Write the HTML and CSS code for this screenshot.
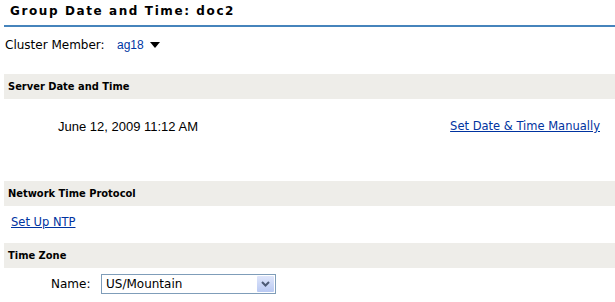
FILE: index.html
```html
<!DOCTYPE html>
<html>
<head>
<meta charset="utf-8">
<link rel="stylesheet" href="styles.css">
</head>
<body>
<div class="page">
  <div class="title">Group Date and Time: doc2</div>
  <div class="member-row">
    <span class="label">Cluster Member:</span>
    <span class="member">ag18</span>
    <svg class="caret" width="10" height="6" viewBox="0 0 10 6"><path d="M0 0H10L5 6Z" fill="#000"/></svg>
  </div>
  <div class="bar">Server Date and Time</div>
  <div class="date-row">
    <span class="date">June 12, 2009 11:12 AM</span>
    <a class="link" href="#">Set Date &amp; Time Manually</a>
  </div>
  <div class="bar bar-ntp">Network Time Protocol</div>
  <div class="ntp-row"><a class="link" href="#">Set Up NTP</a></div>
  <div class="bar">Time Zone</div>
  <div class="tz-row">
    <span class="label">Name:</span>
    <div class="select">
      <span class="select-value">US/Mountain</span>
      <span class="select-btn">
        <svg width="9" height="6" viewBox="0 0 9 6"><path d="M1 1L4.5 4.5L8 1" fill="none" stroke="#4d5a75" stroke-width="2"/></svg>
      </span>
    </div>
  </div>
</div>
</body>
</html>
```
FILE: styles.css
```css
html, body {
  margin: 0;
  padding: 0;
  background: #fff;
}
.page {
  padding-left: 4px;
  font-family: "DejaVu Sans", Verdana, sans-serif;
  font-size: 12px;
  color: #000;
}
.title {
  height: 27px;
  box-sizing: border-box;
  padding: 4px 0 0 6px;
  font-weight: bold;
  font-size: 12px;
  letter-spacing: 1.6px;
  line-height: 15px;
  border-bottom: 2px solid #4684bc;
}
.member-row {
  display: flex;
  align-items: center;
  height: 47px;
  padding: 0 0 12px 1px;
  box-sizing: border-box;
}
.member-row .label {
  width: 112px;
}
.member {
  color: #0036a3;
  font-family: "Liberation Sans", Arial, sans-serif;
  font-size: 12px;
}
.caret {
  margin-left: 6px;
}
.bar {
  background: #eeede9;
  height: 25px;
  line-height: 25px;
  padding-left: 4px;
  font-family: "DejaVu Sans Condensed", "DejaVu Sans", sans-serif;
  font-weight: bold;
  font-size: 11px;
}
.date-row {
  display: flex;
  align-items: center;
  justify-content: space-between;
  height: 82px;
  padding: 0 15px 28px 54px;
  box-sizing: border-box;
}
.date {
  font-family: "Liberation Sans", Arial, sans-serif;
  font-size: 13px;
}
.link {
  color: #0033a0;
  text-decoration: underline;
  font-size: 11.5px;
}
.ntp-row {
  height: 37px;
  display: flex;
  align-items: center;
  padding-left: 7px;
  box-sizing: border-box;
  padding-bottom: 5px;
}
.tz-row {
  display: flex;
  align-items: center;
  padding-top: 6px;
}
.tz-row .label {
  width: 50px;
  padding-left: 47px;
}
.select {
  width: 175px;
  height: 20px;
  box-sizing: border-box;
  border: 1px solid #7f9db9;
  display: flex;
  align-items: center;
  justify-content: space-between;
  padding: 1px;
}
.select-value {
  padding-left: 3px;
}
.select-btn {
  width: 17px;
  height: 16px;
  background: linear-gradient(#dfe6fb, #b9c9f3);
  display: flex;
  align-items: center;
  justify-content: center;
  border-radius: 1px;
}
```
